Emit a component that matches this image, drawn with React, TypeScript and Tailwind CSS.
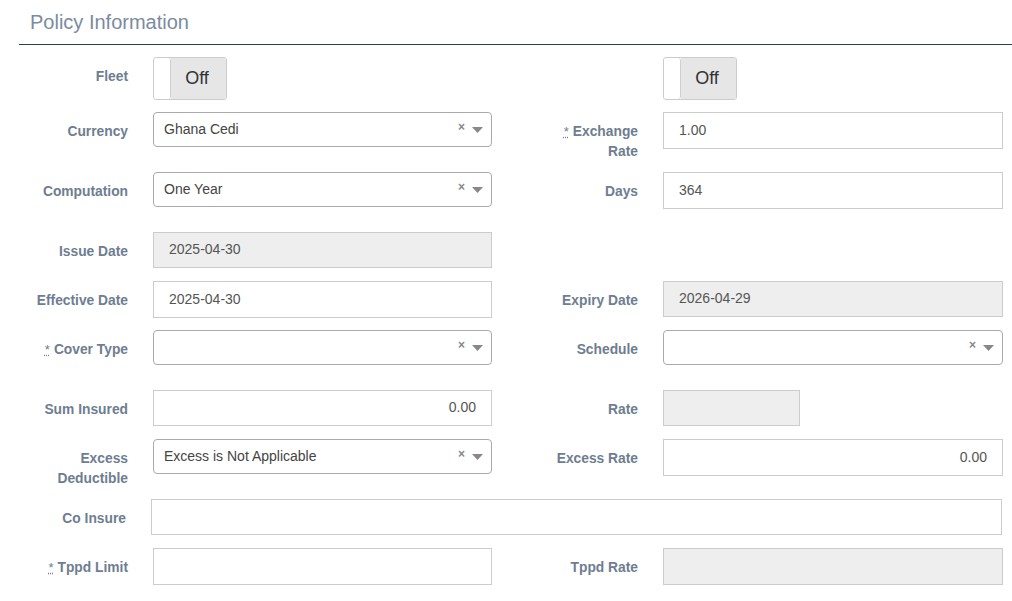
import React from "react";

const font = { fontFamily: '"Liberation Sans", Arial, sans-serif' };

function Label({ text, req, w = "w-[128px]" }: { text: React.ReactNode; req?: boolean; w?: string }) {
  return (
    <div className={`${w} shrink-0 text-right pt-[10px] text-[13.8px] leading-[20px] font-bold text-[#6e7d91]`}>
      {req && (
        <abbr className="text-[13px] font-normal align-top mr-[4px]" title="required" style={{ textDecorationLine: "underline", textDecorationStyle: "dotted" }}>
          *
        </abbr>
      )}
      {text}
    </div>
  );
}

function TextInput({ value = "", disabled, right, w = "w-[339px]", h = "h-[37px]" }: { value?: string; disabled?: boolean; right?: boolean; w?: string; h?: string }) {
  return (
    <div
      className={`${w} ${h} shrink-0 border border-[#cccccc] flex items-center ${right ? "justify-end pr-[15px]" : "pl-[15px]"} text-[14px] text-[#555555] ${disabled ? "bg-[#eeeeee]" : "bg-white"}`}
    >
      <span className="-mt-[1px]">{value}</span>
    </div>
  );
}

function Select({ value = "", w = "w-[339px]" }: { value?: string; w?: string }) {
  return (
    <div className={`${w} h-[35px] shrink-0 border border-[#aaaaaa] rounded-[4px] bg-white flex items-center pl-[10px] pr-[8px] text-[14px] text-[#444444]`}>
      <span className="flex-1">{value}</span>
      <span className="text-[12px] font-bold text-[#888888] mr-[7px] -mt-[5px] leading-none">×</span>
      <svg width="11" height="6" viewBox="0 0 11 6" className="mt-[1px]">
        <path d="M0 0 L11 0 L5.5 6 Z" fill="#888888" />
      </svg>
    </div>
  );
}

function Toggle() {
  return (
    <div className="w-[74px] h-[43px] border border-[#cccccc] rounded-[3px] flex overflow-hidden shrink-0">
      <div className="w-[17px] bg-white border-r border-[#d0d0d0] rounded-[3px]" />
      <div className="flex-1 bg-[#e6e6e6] flex items-center justify-center text-[18px] text-[#333333] pr-[3px]">Off</div>
    </div>
  );
}

function Row({ h, children }: { h: string; children: React.ReactNode }) {
  return <div className={`flex ${h}`}>{children}</div>;
}

const gap = <div className="w-[25px] shrink-0" />;

export default function App() {
  return (
    <div style={font} className="w-[1012px] h-[601px] bg-white overflow-hidden">
      <div className="ml-[19px] pl-[11px] h-[45px] border-b border-[#2c3e50] pt-[8px] text-[20px] leading-[28px] text-[#7b8ba0]">
        Policy Information
      </div>
      <div className="mt-[12px]">
        <Row h="h-[55px]">
          <Label text="Fleet" />
          {gap}
          <div className="w-[339px] shrink-0">
            <Toggle />
          </div>
          <Label text="" w="w-[146px]" />
          {gap}
          <Toggle />
        </Row>
        <Row h="h-[60px]">
          <Label text="Currency" />
          {gap}
          <Select value="Ghana Cedi" />
          <Label
            w="w-[146px]"
            req
            text={
              <>
                Exchange
                <br />
                Rate
              </>
            }
          />
          {gap}
          <TextInput value="1.00" w="w-[340px]" />
        </Row>
        <Row h="h-[60px]">
          <Label text="Computation" />
          {gap}
          <Select value="One Year" />
          <Label w="w-[146px]" text="Days" />
          {gap}
          <TextInput value="364" w="w-[340px]" />
        </Row>
        <Row h="h-[49px]">
          <Label text="Issue Date" />
          {gap}
          <TextInput value="2025-04-30" disabled h="h-[36px]" />
        </Row>
        <Row h="h-[49px]">
          <Label text="Effective Date" />
          {gap}
          <TextInput value="2025-04-30" />
          <Label w="w-[146px]" text="Expiry Date" />
          {gap}
          <TextInput value="2026-04-29" disabled w="w-[340px]" h="h-[36px]" />
        </Row>
        <Row h="h-[60px]">
          <Label text="Cover Type" req />
          {gap}
          <Select />
          <Label w="w-[146px]" text="Schedule" />
          {gap}
          <Select w="w-[340px]" />
        </Row>
        <Row h="h-[49px]">
          <Label text="Sum Insured" />
          {gap}
          <TextInput value="0.00" right h="h-[36px]" />
          <Label w="w-[146px]" text="Rate" />
          {gap}
          <TextInput disabled w="w-[137px]" h="h-[36px]" />
        </Row>
        <Row h="h-[60px]">
          <Label
            text={
              <>
                Excess
                <br />
                Deductible
              </>
            }
          />
          {gap}
          <Select value="Excess is Not Applicable" />
          <Label w="w-[146px]" text="Excess Rate" />
          {gap}
          <TextInput value="0.00" right w="w-[340px]" />
        </Row>
        <Row h="h-[49px]">
          <Label text="Co Insure" w="w-[126px]" />
          {gap}
          <TextInput w="w-[851px]" h="h-[36px]" />
        </Row>
        <Row h="h-[49px]">
          <Label text="Tppd Limit" req />
          {gap}
          <TextInput />
          <Label w="w-[146px]" text="Tppd Rate" />
          {gap}
          <TextInput disabled w="w-[340px]" />
        </Row>
      </div>
    </div>
  );
}
